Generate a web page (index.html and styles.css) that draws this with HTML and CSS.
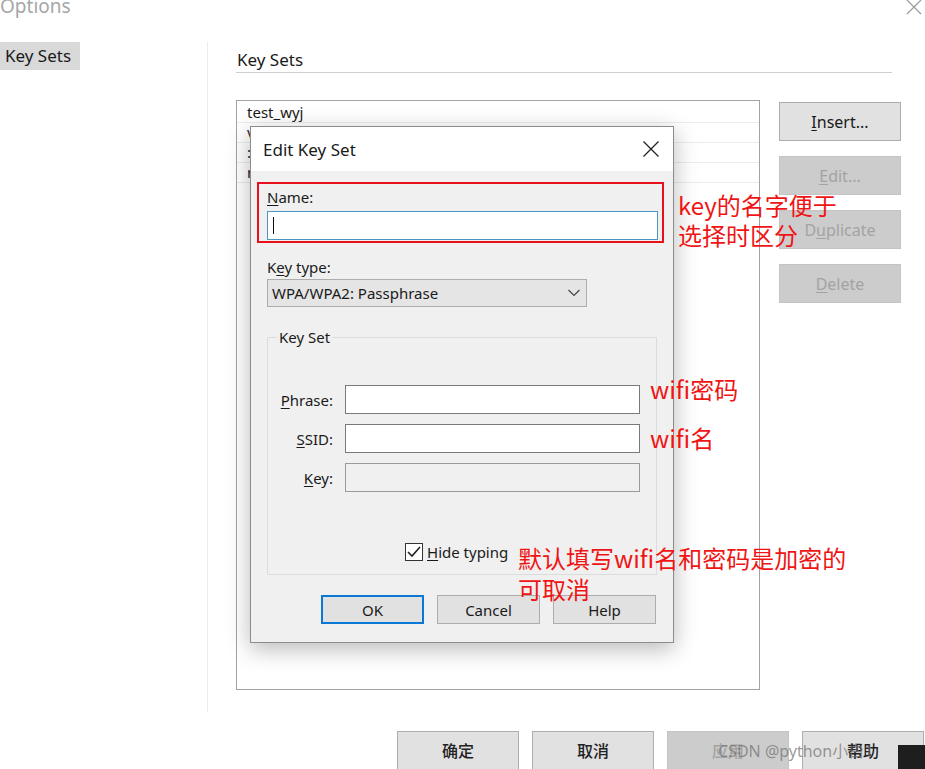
FILE: index.html
```html
<!DOCTYPE html>
<html>
<head>
<meta charset="utf-8">
<link rel="stylesheet" href="styles.css">
</head>
<body>
<div class="window">
  <div class="titlebar">
    <span class="title">Options</span>
    <svg class="win-close" width="16" height="16" viewBox="0 0 16 16"><path d="M1 1L15 15M15 1L1 15" stroke="#9a9a9a" stroke-width="1.2" fill="none"/></svg>
  </div>
  <div class="content">
    <aside class="sidebar"><div class="tab">Key Sets</div></aside>
    <main class="main">
      <div class="section-title">Key Sets</div>
      <div class="keysets">
        <div class="list">
          <div class="row">test_wyj</div>
          <div class="row">v</div>
          <div class="row">:</div>
          <div class="row">r</div>
        </div>
        <div class="side-buttons">
          <div class="btn"><u>I</u>nsert...</div>
          <div class="btn disabled"><u>E</u>dit...</div>
          <div class="btn disabled">D<u>u</u>plicate</div>
          <div class="btn disabled"><u>D</u>elete</div>
        </div>
      </div>
    </main>
  </div>
  <div class="footer">
    <div class="fbtn">确定</div>
    <div class="fbtn">取消</div>
    <div class="fbtn disabled">应用</div>
    <div class="fbtn">帮助</div>
  </div>

  <div class="dialog">
    <div class="dlg-title">
      <span>Edit Key Set</span>
      <svg width="16" height="16" viewBox="0 0 16 16"><path d="M0.5 0.5L15.5 15.5M15.5 0.5L0.5 15.5" stroke="#222" stroke-width="1.3" fill="none"/></svg>
    </div>
    <div class="dlg-body">
      <div class="lbl"><u>N</u>ame:</div>
      <div class="field focus"><span class="caret"></span></div>
      <div class="lbl lbl-gap">K<u>e</u>y type:</div>
      <div class="select">
        <span>WPA/WPA2: Passphrase</span>
        <svg width="12" height="8" viewBox="0 0 12 8"><polyline points="0.5,1 6,6.5 11.5,1" stroke="#444" stroke-width="1.2" fill="none"/></svg>
      </div>
      <fieldset class="group">
        <legend>Key Set</legend>
        <div class="grid">
          <div class="glbl"><u>P</u>hrase:</div><div class="field"></div>
          <div class="glbl"><u>S</u>SID:</div><div class="field"></div>
          <div class="glbl"><u>K</u>ey:</div><div class="field off"></div>
        </div>
        <div class="check-row">
          <span class="checkbox"><svg width="14" height="12" viewBox="0 0 14 12"><polyline points="1,6 5,10 13,1" stroke="#222" stroke-width="1.6" fill="none"/></svg></span>
          <span><u>H</u>ide typing</span>
        </div>
      </fieldset>
      <div class="dlg-buttons">
        <div class="dbtn default">OK</div>
        <div class="dbtn">Cancel</div>
        <div class="dbtn">Help</div>
      </div>
    </div>
  </div>

  <div class="red-box"></div>
  <div class="note note-name">key的名字便于<br>选择时区分</div>
  <div class="note note-phrase">wifi密码</div>
  <div class="note note-ssid">wifi名</div>
  <div class="note note-hide">默认填写wifi名和密码是加密的<br>可取消</div>
  <div class="watermark">CSDN @python小白1</div>
  <div class="dark-corner"></div>
</div>
</body>
</html>
```
FILE: styles.css
```css
* { box-sizing: border-box; }
html, body { margin: 0; padding: 0; background: #fff; }
body {
  font-family: "Noto Sans", "Noto Sans CJK SC", sans-serif;
  color: #1a1a1a;
}
u { text-decoration: underline; text-underline-offset: 2px; }

.window {
  position: relative;
  width: 925px;
  height: 769px;
  overflow: hidden;
  background: #fff;
}

.titlebar {
  height: 42px;
  display: flex;
  justify-content: space-between;
  align-items: flex-start;
}
.title {
  font-size: 19px;
  color: #a6a6a6;
  line-height: 20px;
  margin-top: -4px;
}
.win-close { margin: -1px 3px 0 0; }

.content {
  display: flex;
  height: 670px;
}
.sidebar {
  width: 208px;
  border-right: 1px solid #ececec;
}
.tab {
  display: inline-block;
  background: #d9d9d9;
  font-size: 17px;
  line-height: 28px;
  height: 28px;
  padding: 0 5px 0 5px;
  width: 80px;
}
.main {
  padding-left: 28px;
}
.section-title {
  margin-top: 8px;
  width: 656px;
  font-size: 17px;
  line-height: 20px;
  padding: 0 0 2px 1px;
  border-bottom: 1px solid #cfcfcf;
}
.keysets {
  display: flex;
  gap: 19px;
  margin-top: 27px;
}
.list {
  width: 524px;
  height: 590px;
  border: 1px solid #a3a3a3;
  padding-top: 2px;
}
.row {
  height: 20px;
  line-height: 19px;
  font-size: 15px;
  padding-left: 10px;
  border-bottom: 1px solid #ececec;
}
.side-buttons {
  margin-top: 2px;
  display: flex;
  flex-direction: column;
  gap: 15px;
}
.btn {
  width: 122px;
  height: 39px;
  background: #e1e1e1;
  border: 1px solid #adadad;
  display: flex;
  align-items: center;
  justify-content: center;
  font-size: 16px;
  color: #1a1a1a;
}
.btn.disabled {
  background: #cccccc;
  border-color: #c4c4c4;
  color: #a3a3a3;
}

.footer {
  display: flex;
  gap: 13px;
  padding: 19px 0 0 397px;
}
.fbtn {
  width: 122px;
  height: 40px;
  background: #e1e1e1;
  border: 1px solid #adadad;
  display: flex;
  align-items: center;
  justify-content: center;
  padding-bottom: 3px;
  font-family: "Noto Sans CJK SC", sans-serif;
  font-size: 16px;
  font-weight: 500;
  color: #222;
}
.fbtn.disabled { background: #cccccc; border-color: #c4c4c4; color: #a3a3a3; }

/* dialog */
.dialog {
  position: absolute;
  left: 250px;
  top: 126px;
  width: 424px;
  height: 517px;
  border: 1px solid #8c8c8c;
  background: #f0f0f0;
  box-shadow: 0 6px 22px rgba(0,0,0,0.28);
  display: flex;
  flex-direction: column;
}
.dlg-title {
  height: 44px;
  background: #fff;
  display: flex;
  align-items: center;
  justify-content: space-between;
  padding: 0 14px 0 12px;
  font-size: 17px;
  color: #1a1a1a;
}
.dlg-body {
  padding: 17px 16px 0 16px;
  font-size: 15px;
}
.lbl { line-height: 18px; height: 18px; margin-bottom: 5px; }
.lbl-gap { margin-top: 18px; margin-bottom: 3px; }
.field {
  height: 29px;
  background: #fff;
  border: 1px solid #7a7a7a;
  position: relative;
}
.field.focus {
  width: 391px;
  border-color: #4a97c4;
}
.field.off { background: #f0f0f0; border-color: #9a9a9a; }
.caret {
  position: absolute;
  left: 5px;
  top: 5px;
  height: 17px;
  border-left: 1px solid #111;
}
.select {
  width: 320px;
  height: 28px;
  background: #e5e5e5;
  border: 1px solid #adadad;
  display: flex;
  align-items: center;
  justify-content: space-between;
  padding: 0 6px 0 4px;
}
.group {
  margin: 21px 0 0 0;
  width: 390px;
  border: 1px solid #dcdcdc;
  padding: 0 0 13px 0;
  min-width: 0;
}
.group legend {
  margin-left: 9px;
  padding: 0 2px;
  line-height: 18px;
}
.grid {
  display: grid;
  grid-template-columns: 65px 295px;
  column-gap: 12px;
  row-gap: 10px;
  margin-top: 39px;
  align-items: center;
}
.grid .field { height: 29px; }
.glbl { text-align: right; }
.check-row {
  margin-top: 50px;
  padding-left: 137px;
  display: flex;
  align-items: center;
  gap: 4px;
  height: 19px;
}
.checkbox {
  width: 18px;
  height: 18px;
  border: 1px solid #333;
  background: #fff;
  display: flex;
  align-items: center;
  justify-content: center;
}
.dlg-buttons {
  display: flex;
  justify-content: flex-end;
  gap: 13px;
  margin-top: 20px;
  padding-right: 1px;
}
.dbtn {
  width: 103px;
  height: 29px;
  background: #e1e1e1;
  border: 1px solid #adadad;
  display: flex;
  align-items: center;
  justify-content: center;
}
.dbtn.default { border: 2px solid #0a78d4; }

/* annotations */
.red-box {
  position: absolute;
  left: 257px;
  top: 182px;
  width: 407px;
  height: 61px;
  border: 2px solid #e8101a;
}
.note {
  position: absolute;
  color: #f01515;
  font-family: "Noto Sans CJK SC", sans-serif;
  font-size: 24px;
  line-height: 30px;
}
.note-name { left: 678px; top: 190px; }
.note-phrase { left: 650px; top: 374px; }
.note-ssid { left: 650px; top: 423px; }
.note-hide { left: 518px; top: 542px; line-height: 31px; }
.watermark {
  position: absolute;
  left: 718px;
  top: 738px;
  font-size: 16px;
  color: rgba(110,110,110,0.7);
  font-family: "Noto Sans", "Noto Sans CJK SC", sans-serif;
}
.dark-corner {
  position: absolute;
  left: 898px;
  top: 745px;
  width: 27px;
  height: 24px;
  background: #1e1e1e;
}
```
